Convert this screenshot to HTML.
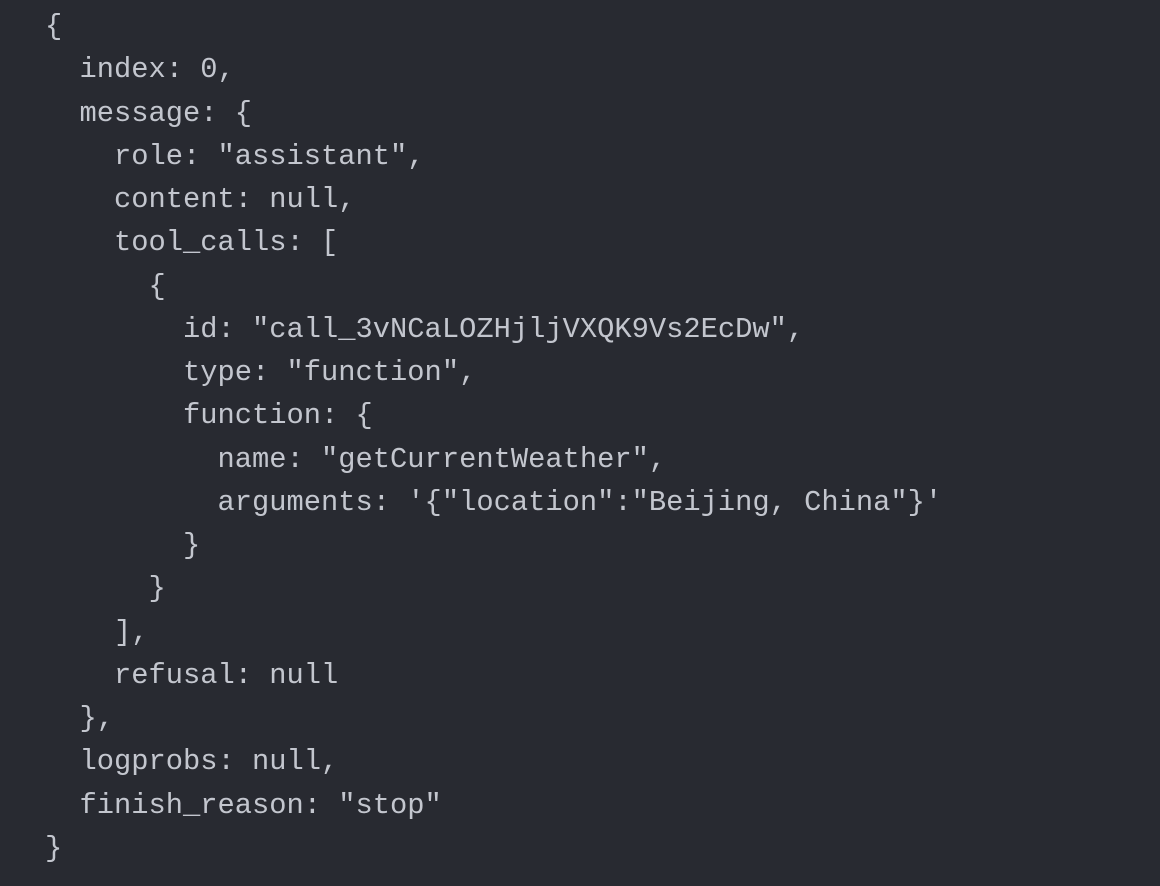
<!DOCTYPE html>
<html><head><meta charset="utf-8"><style>
html,body{margin:0;padding:0;background:#282a31;width:1160px;height:886px;overflow:hidden}
pre{margin:0;position:absolute;left:45px;top:5px;font-family:"Liberation Mono",monospace;font-size:28.75px;line-height:43.25px;color:#c3c6ce}
</style></head><body><pre>{
  index: 0,
  message: {
    role: "assistant",
    content: null,
    tool_calls: [
      {
        id: "call_3vNCaLOZHjljVXQK9Vs2EcDw",
        type: "function",
        function: {
          name: "getCurrentWeather",
          arguments: '{"location":"Beijing, China"}'
        }
      }
    ],
    refusal: null
  },
  logprobs: null,
  finish_reason: "stop"
}</pre></body></html>
